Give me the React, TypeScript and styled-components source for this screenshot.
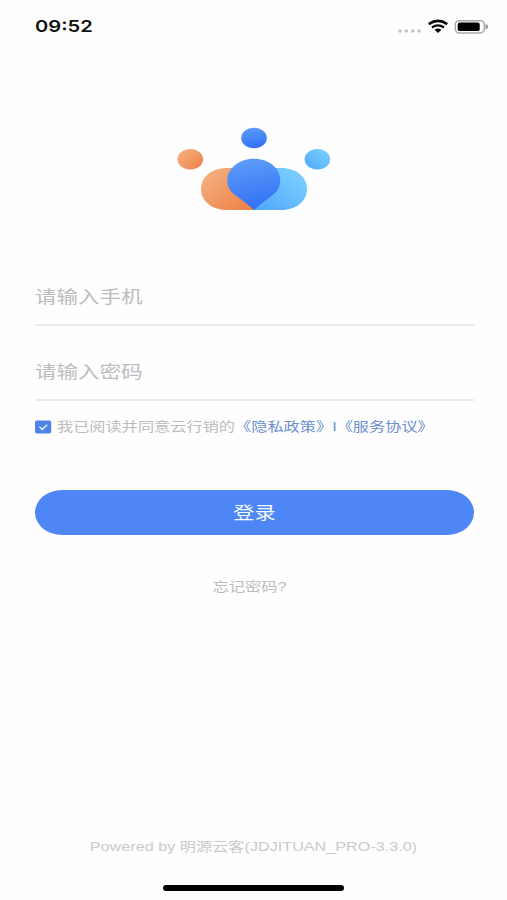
import React from "react";
import styled, { createGlobalStyle } from "styled-components";

const GlobalStyle = createGlobalStyle`
  * { box-sizing: border-box; }
  body {
    margin: 0;
    background: #fefefe;
    font-family: "Liberation Sans", "Noto Sans CJK SC", sans-serif;
  }
`;

const Screen = styled.main`
  display: flex;
  flex-direction: column;
  width: 507px;
  height: 900px;
  overflow: hidden;
  background: #fefefe;
`;

const WideText = styled.span<{ $size: number; $stretch: number; $origin?: string; $color: string }>`
  display: inline-block;
  flex: none;
  white-space: pre;
  font-size: ${(p) => p.$size}px;
  line-height: 1.4;
  color: ${(p) => p.$color};
  transform: scaleX(${(p) => p.$stretch});
  transform-origin: ${(p) => p.$origin ?? "left"} center;
`;

const StatusBar = styled.header`
  display: flex;
  align-items: center;
  justify-content: space-between;
  height: 53px;
  padding: 0 18px 0 35px;
`;

const Clock = styled(WideText)`
  padding-top: 1px;
  font-family: Inter, sans-serif;
  font-weight: 600;
`;

const LogoArea = styled.div`
  display: flex;
  justify-content: center;
  height: 217px;
  padding-top: 74px;
`;

const Form = styled.form`
  display: flex;
  flex-direction: column;
  width: 439px;
  margin-left: 34.5px;
`;

const Field = styled.div<{ $height: number }>`
  display: flex;
  align-items: flex-end;
  height: ${(p) => p.$height}px;
  padding-bottom: 15px;
  border-bottom: 2px solid #ebebec;
`;

const Agreement = styled.div`
  display: flex;
  align-items: center;
  gap: 5px;
  height: 52px;
`;

const Link = styled.span`
  color: #6b8fd0;
`;

const Submit = styled.button`
  display: flex;
  align-items: center;
  justify-content: center;
  height: 45px;
  margin-top: 37px;
  padding: 1px 0 0;
  border: 0;
  border-radius: 27px / 22.5px;
  background: #4e86f5;
  font-family: inherit;
`;

const Forgot = styled.div`
  display: flex;
  justify-content: center;
  margin-top: 43px;
  padding-right: 8px;
`;

const Footer = styled.footer`
  display: flex;
  flex-direction: column;
  align-items: center;
  margin-top: auto;
`;

const HomeIndicator = styled.div`
  width: 181px;
  height: 6px;
  margin: 29px 0 9px;
  border-radius: 3px;
  background: #000;
`;

const StatusIcons = () => (
  <svg width="92" height="24" viewBox="397 14.5 92 24">
    <g fill="#c4c4c4">
      <circle cx="400" cy="30.5" r="1.8" />
      <circle cx="406.3" cy="30.5" r="1.8" />
      <circle cx="412.7" cy="30.5" r="1.8" />
      <circle cx="419" cy="30.5" r="1.8" />
    </g>
    <g fill="none" stroke="#080808">
      <path d="M428.8 23.6Q438 17.2 447.2 23.6" strokeWidth="2.7" />
      <path d="M432 27Q438 22.7 444 27" strokeWidth="2.3" />
    </g>
    <path d="M434.6 29.2Q438 26.8 441.4 29.2L438 32.4Z" fill="#080808" />
    <rect x="455.3" y="20.2" width="29" height="12.2" rx="3.8" fill="#fff" stroke="#aaa" strokeWidth="1.5" />
    <rect x="457.7" y="22.1" width="22" height="8.4" rx="1.8" fill="#000" />
    <path d="M485.5 23.6Q488.3 24.4 488.3 26.3T485.5 29Z" fill="#999" />
  </svg>
);

const Logo = () => (
  <svg width="154" height="84" viewBox="177 127 154 84">
    <defs>
      <linearGradient id="orange" x1="0" y1="0" x2="1" y2="1">
        <stop stopColor="#f5b585" />
        <stop offset="1" stopColor="#ee7e45" />
      </linearGradient>
      <linearGradient id="blue" x1="0" y1="0" x2="0.2" y2="1">
        <stop stopColor="#609ff8" />
        <stop offset="1" stopColor="#3572f6" />
      </linearGradient>
      <linearGradient id="sky" x1="1" y1="0" x2="0" y2="1">
        <stop stopColor="#81d5ff" />
        <stop offset="1" stopColor="#4da6fb" />
      </linearGradient>
    </defs>
    <ellipse cx="190.3" cy="159.2" rx="12.8" ry="10.3" fill="url(#orange)" />
    <ellipse cx="254" cy="138" rx="12.8" ry="10.3" fill="url(#blue)" />
    <ellipse cx="317.4" cy="159.2" rx="12.8" ry="10.3" fill="url(#sky)" />
    <path d="M227 168C211 168 201 177.5 201 189S211 210 227 210H254V168Z" fill="url(#orange)" />
    <path d="M281 168C297 168 307 177.5 307 189S297 210 281 210H254V168Z" fill="url(#sky)" />
    <path d="M254 158.8C269.5 158.8 280.3 168.8 280.3 180.5C280.3 187.5 276.5 192.5 271.5 196C264.5 200.8 258.5 206 254 210C249.5 206 243.5 200.8 236.5 196C231 192.5 227.3 187.5 227.3 180.5C227.3 168.8 238.5 158.8 254 158.8Z" fill="url(#blue)" />
  </svg>
);

const Checkbox = () => (
  <svg width="17" height="14" viewBox="0 0 17 14">
    <rect x="0" y="0.5" width="16.2" height="13" rx="1.8" fill="#4d83e9" />
    <path d="M4.3 6.7L7.3 9.4L12.2 4.8" fill="none" stroke="#dce9ff" strokeWidth="1.5" />
  </svg>
);

export default function App() {
  return (
    <>
      <GlobalStyle />
      <Screen>
        <StatusBar>
          <Clock $size={16.5} $stretch={1.22} $color="#111">09:52</Clock>
          <StatusIcons />
        </StatusBar>
        <LogoArea>
          <Logo />
        </LogoArea>
        <Form>
          <Field $height={56}>
            <WideText $size={17.5} $stretch={1.23} $color="#bcbcbe">请输入手机</WideText>
          </Field>
          <Field $height={75}>
            <WideText $size={17.5} $stretch={1.23} $color="#bcbcbe">请输入密码</WideText>
          </Field>
          <Agreement>
            <Checkbox />
            <WideText $size={13} $stretch={1.245} $color="#bcbcbe">
              我已阅读并同意云行销的<Link>《隐私政策》I《服务协议》</Link>
            </WideText>
          </Agreement>
          <Submit type="button">
            <WideText $size={17.5} $stretch={1.21} $origin="center" $color="#f4f8ff">登录</WideText>
          </Submit>
          <Forgot>
            <WideText $size={13} $stretch={1.25} $origin="center" $color="#bcbcbe">忘记密码?</WideText>
          </Forgot>
        </Form>
        <Footer>
          <WideText $size={13} $stretch={1.245} $origin="center" $color="#cacaca">
            Powered by 明源云客(JDJITUAN_PRO-3.3.0)
          </WideText>
          <HomeIndicator />
        </Footer>
      </Screen>
    </>
  );
}
